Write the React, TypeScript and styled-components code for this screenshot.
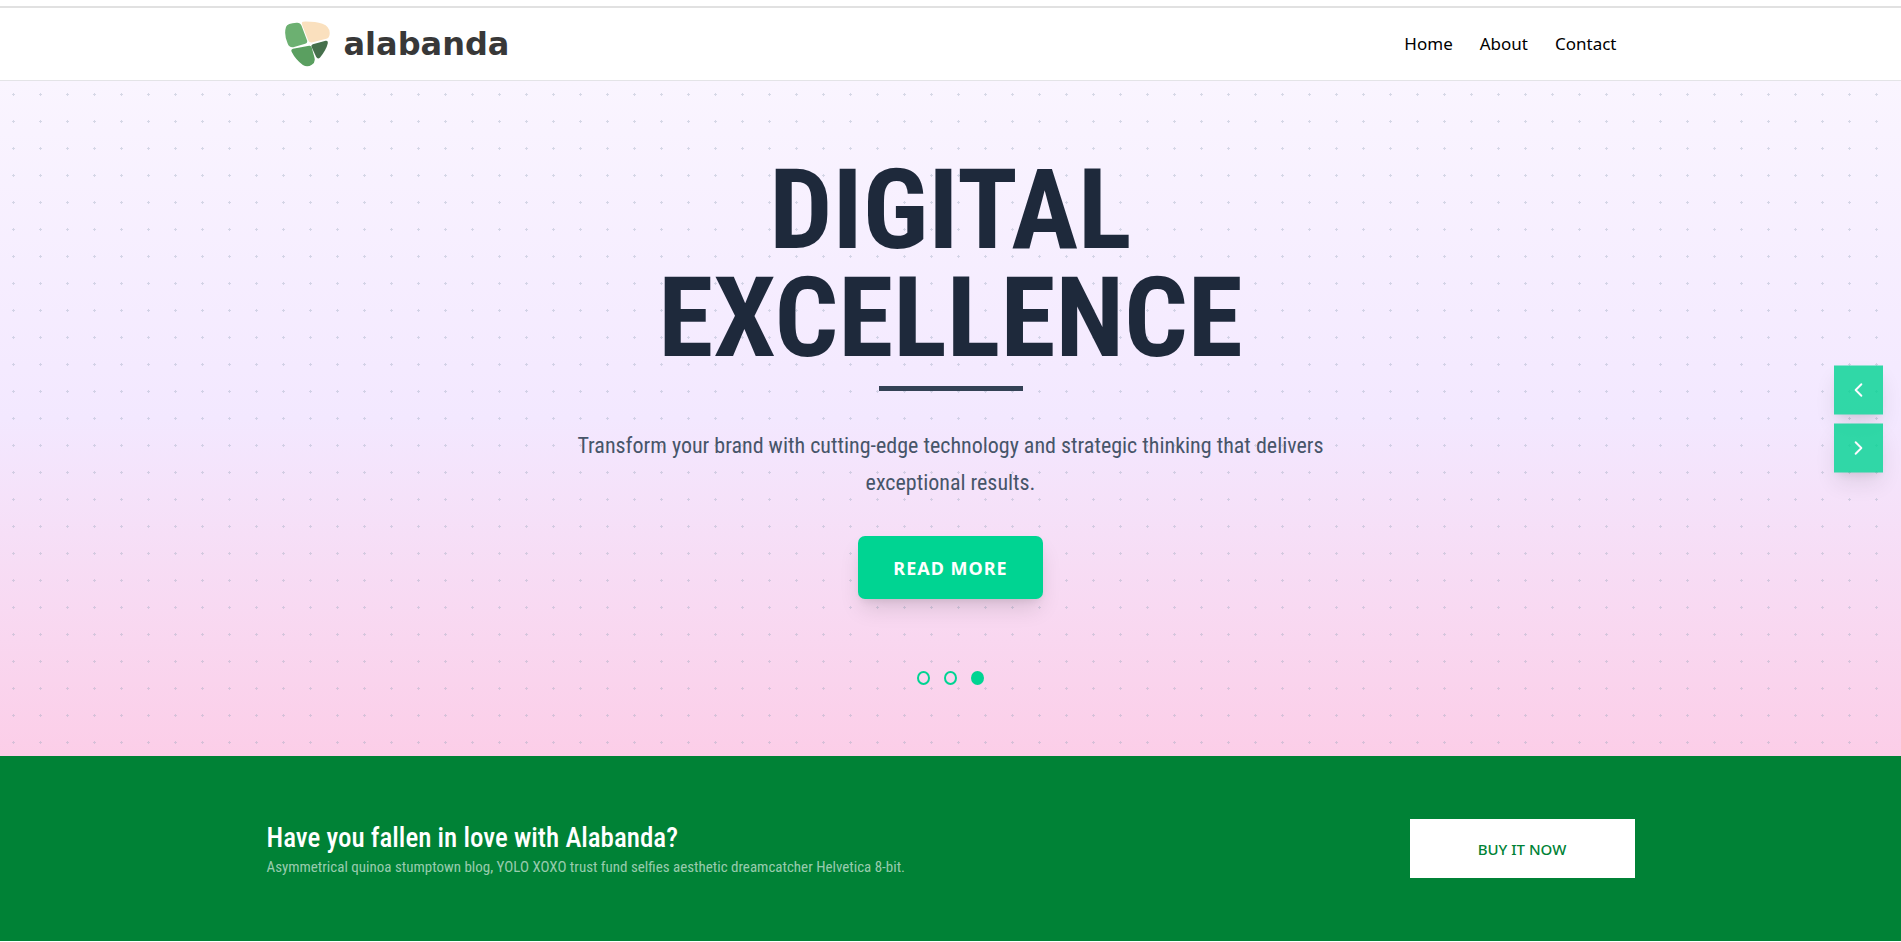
import React, { useState } from "react";
import styled, { createGlobalStyle } from "styled-components";
import { ChevronLeft, ChevronRight } from "lucide-react";

const display = `"Roboto Condensed", Roboto, sans-serif`;
const body = `"Noto Sans", "Open Sans", sans-serif`;
const emerald = "#00d492";
const lift = "0 12px 22px -3px rgba(0, 0, 0, 0.12), 0 5px 8px -4px rgba(0, 0, 0, 0.1)";

const GlobalStyle = createGlobalStyle`
  *, *::before, *::after { box-sizing: border-box; }
  body { margin: 0; background: #fff; font-family: ${body}; color: #000; }
  h1, h2, p { margin: 0; }
  button { font: inherit; border: 0; padding: 0; cursor: pointer; }
`;

const Header = styled.header`
  margin-top: 6px;
  border-top: 2px solid #e1e1e1;
  border-bottom: 1px solid #e4e4e7;
  background: #fff;
`;

const HeaderInner = styled.div`
  display: flex;
  align-items: center;
  justify-content: space-between;
  max-width: 1368px;
  height: 72px;
  margin: 0 auto;
  padding: 0 18px;
`;

const Brand = styled.a`
  display: flex;
  align-items: center;
  gap: 14px;
  color: #383838;
  font: 700 32px/44px "DejaVu Sans", sans-serif;
  text-decoration: none;
`;

const BrandMark = styled.svg`
  width: 45px;
  height: 46px;
`;

const Nav = styled.nav`
  display: flex;
  gap: 27px;
`;

const NavLink = styled.a`
  color: #000;
  font-size: 17px;
  line-height: 28px;
  text-decoration: none;
`;

const Hero = styled.section`
  position: relative;
  display: flex;
  flex-direction: column;
  align-items: center;
  padding: 75px 72px 71px;
  text-align: center;
  background:
    radial-gradient(circle closest-side, rgba(148, 163, 184, 0.35) 9%, transparent 9%) 0 0 / 27px 27px,
    linear-gradient(to bottom, #faf5ff, #f3e8ff 50%, #fccee8);
`;

const HeroTitle = styled.h1`
  max-width: 760px;
  color: #1e293b;
  font: 700 112px/108px ${display};
  text-transform: uppercase;
`;

const Rule = styled.div`
  width: 144px;
  height: 5px;
  margin-top: 14px;
  background: #334155;
`;

const HeroText = styled.p`
  max-width: 756px;
  margin-top: 36px;
  color: #475569;
  font: 400 22px/37px ${display};
`;

const PrimaryButton = styled.button`
  height: 63px;
  margin-top: 35px;
  padding: 0 35px;
  border-radius: 7px;
  background: ${emerald};
  color: #fff;
  font-size: 18px;
  font-weight: 700;
  letter-spacing: 1px;
  box-shadow: ${lift};
`;

const Pager = styled.div`
  display: flex;
  gap: 14px;
  margin-top: 72px;
`;

const PagerDot = styled.button<{ $active: boolean }>`
  width: 13px;
  height: 14px;
  border: 2px solid ${emerald};
  border-radius: 50%;
  background: ${(p) => (p.$active ? emerald : "transparent")};
`;

const Arrows = styled.div`
  position: absolute;
  top: 50%;
  right: 18px;
  display: flex;
  flex-direction: column;
  gap: 9px;
  transform: translateY(-50%);
`;

const ArrowButton = styled.button`
  display: grid;
  place-items: center;
  width: 49px;
  height: 49px;
  background: ${emerald};
  color: #fff;
  opacity: 0.8;
  box-shadow: ${lift};
`;

const Cta = styled.section`
  background: #008236;
`;

const CtaInner = styled.div`
  display: flex;
  align-items: center;
  justify-content: space-between;
  gap: 36px;
  max-width: 1368px;
  margin: 0 auto;
  padding: 63px 0;
`;

const CtaTitle = styled.h2`
  color: #fff;
  font: 500 27px/36px ${display};
`;

const CtaText = styled.p`
  color: rgba(255, 255, 255, 0.6);
  font: 400 15px/22px ${display};
`;

const CtaButton = styled.button`
  flex: none;
  width: 225px;
  height: 59px;
  background: #fff;
  color: #008236;
  font-size: 15px;
  font-weight: 500;
`;

const links = ["Home", "About", "Contact"];
const slides = [0, 1, 2];

export default function App() {
  const [slide, setSlide] = useState(2);
  const move = (step: number) => setSlide((slide + step + slides.length) % slides.length);

  return (
    <>
      <GlobalStyle />
      <Header>
        <HeaderInner>
          <Brand href="#home">
            <BrandMark viewBox="75 65 136 137" aria-hidden="true">
              <path fill="#6cb071" d="M78 82Q82 70 110 69Q121 68 125 78L142 124Q143 131 136 133L100 143Q88 145 83 132Q71 105 78 82Z" />
              <path fill="#fae0be" d="M129 66Q165 65 188 72Q212 81 210 103Q209 115 200 118L156 129Q148 130 145 122L127 76Q124 67 129 66Z" />
              <path fill="#5a9f60" d="M99 148L148 139Q154 138 156 145L164 174Q168 189 156 196Q143 205 129 197Q107 181 95 157Q92 150 99 148Z" />
              <path fill="#46704c" d="M159 134L198 124Q206 123 204 133Q199 153 181 174Q174 181 169 172L155 142Q153 136 159 134Z" />
            </BrandMark>
            alabanda
          </Brand>
          <Nav>
            {links.map((name) => (
              <NavLink key={name} href={`#${name.toLowerCase()}`}>
                {name}
              </NavLink>
            ))}
          </Nav>
        </HeaderInner>
      </Header>

      <main>
        <Hero>
          <HeroTitle>
            Digital
            <br />
            Excellence
          </HeroTitle>
          <Rule />
          <HeroText>
            Transform your brand with cutting-edge technology and strategic thinking that delivers exceptional results.
          </HeroText>
          <PrimaryButton type="button">READ MORE</PrimaryButton>
          <Pager>
            {slides.map((n) => (
              <PagerDot
                key={n}
                type="button"
                $active={n === slide}
                aria-label={`Slide ${n + 1}`}
                onClick={() => setSlide(n)}
              />
            ))}
          </Pager>
          <Arrows>
            <ArrowButton type="button" aria-label="Previous slide" onClick={() => move(-1)}>
              <ChevronLeft size={23} />
            </ArrowButton>
            <ArrowButton type="button" aria-label="Next slide" onClick={() => move(1)}>
              <ChevronRight size={23} />
            </ArrowButton>
          </Arrows>
        </Hero>

        <Cta>
          <CtaInner>
            <div>
              <CtaTitle>Have you fallen in love with Alabanda?</CtaTitle>
              <CtaText>
                Asymmetrical quinoa stumptown blog, YOLO XOXO trust fund selfies aesthetic dreamcatcher Helvetica 8-bit.
              </CtaText>
            </div>
            <CtaButton type="button">BUY IT NOW</CtaButton>
          </CtaInner>
        </Cta>
      </main>
    </>
  );
}
